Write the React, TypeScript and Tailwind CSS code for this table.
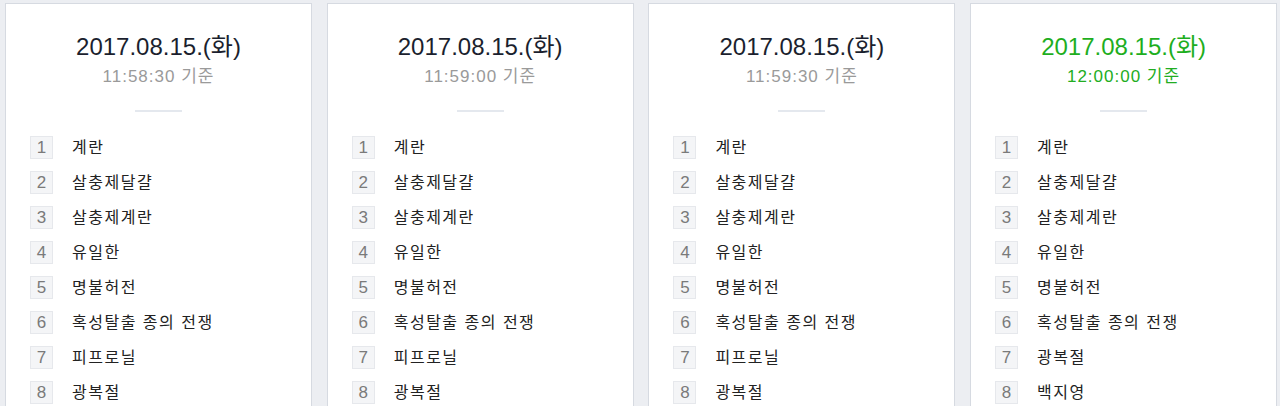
import React from 'react';

interface Snapshot {
    time: string;
    items: string[];
    current?: boolean;
}

const DATE = '2017.08.15.(화)';

const snapshots: Snapshot[] = [
    { time: '11:58:30', items: ['계란', '살충제달걀', '살충제계란', '유일한', '명불허전', '혹성탈출 종의 전쟁', '피프로닐', '광복절', '백지영', '문재인'] },
    { time: '11:59:00', items: ['계란', '살충제달걀', '살충제계란', '유일한', '명불허전', '혹성탈출 종의 전쟁', '피프로닐', '광복절', '백지영', '문재인'] },
    { time: '11:59:30', items: ['계란', '살충제달걀', '살충제계란', '유일한', '명불허전', '혹성탈출 종의 전쟁', '피프로닐', '광복절', '백지영', '문재인'] },
    { time: '12:00:00', items: ['계란', '살충제달걀', '살충제계란', '유일한', '명불허전', '혹성탈출 종의 전쟁', '광복절', '백지영', '피프로닐', '문재인'], current: true },
];

const RankCard: React.FC<{ snap: Snapshot }> = ({ snap }) => (
    <div className="w-[307px] shrink-0 h-[520px] bg-white border border-[#d6dae1] pt-[29px]">
        <div className={`text-center text-[24px] leading-[28px] ${snap.current ? 'text-[#1eae1e]' : 'text-[#1b1f2e]'}`}>{DATE}</div>
        <div className={`text-center text-[17px] leading-[22px] tracking-[1px] mt-[5px] ${snap.current ? 'text-[#22ad22]' : 'text-[#9a9a9a]'}`}>{snap.time} 기준</div>
        <div className="mx-auto mt-[22px] w-[47px] h-[2px] bg-[#e4e8ee]" />
        <ul className="mt-[18px] pl-[24px]">
            {snap.items.map((name, i) => (
                <li key={i} className="flex items-center h-[35px]">
                    <span className="w-[23px] h-[23px] flex items-center justify-center bg-[#f4f5f7] border border-[#e6e8ec] text-[17px] text-[#7a7a7a]">{i + 1}</span>
                    <span className="ml-[19px] text-[16px] tracking-[1.5px] text-[#222]">{name}</span>
                </li>
            ))}
        </ul>
    </div>
);

export default function App() {
    return (
        <div
            className="h-[406px] overflow-hidden bg-[#eceef2] flex gap-[14.7px] pl-[5px] pt-[3px]"
            style={{ fontFamily: '"Liberation Sans", "Noto Sans CJK KR", sans-serif' }}
        >
            {snapshots.map((s, i) => <RankCard key={i} snap={s} />)}
        </div>
    );
}
